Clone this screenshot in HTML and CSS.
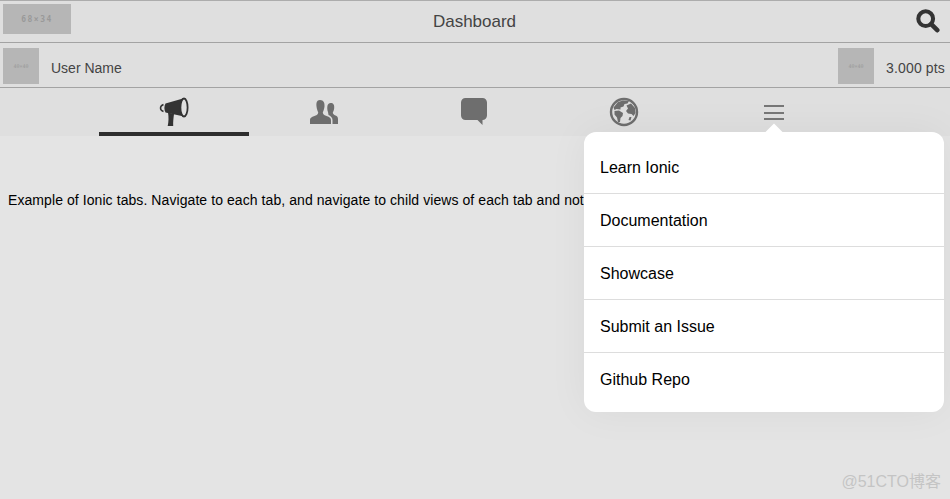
FILE: index.html
```html
<!DOCTYPE html>
<html lang="en">
<head>
  <meta charset="UTF-8" />
  <meta name="viewport" content="width=device-width, initial-scale=1.0"/>
  <title>Dashboard</title>
  <link rel="stylesheet" href="styles.css">
</head>
<body>

<header class="title-bar">
  <div class="thumb thumb-logo">68×34</div>
  <h1>Dashboard</h1>
  <svg class="search-icon" viewBox="0 0 26 26">
    <circle cx="10.5" cy="10.5" r="8" fill="none" stroke="#333" stroke-width="4.4"/>
    <path d="M16.5 16.5 L23 23" stroke="#333" stroke-width="5" stroke-linecap="round"/>
  </svg>
</header>

<div class="user-bar">
  <div class="thumb thumb-small">40×40</div>
  <span class="user-name">User Name</span>
  <div class="thumb thumb-small">40×40</div>
  <span class="pts">3.000 pts</span>
</div>

<nav class="tabs">
  <div class="tab active">
    <svg viewBox="0 0 30 30" width="30" height="30">
      <path fill="#333" d="M6.500 6.500 L24 1.500 L25 19.500 L6.500 15.500 C5 13 5 9 6.500 6.500 Z"/>
      <path fill="none" stroke="#333" stroke-width="1.500" d="M4.500 7.500 C2.500 8.300 1.500 9.500 1.500 11 C1.500 12.500 2.500 13.800 4.500 14.500"/>
      <path fill="#333" d="M9 15.500 L15 17 C14.500 21 14 25 14.200 29 L8.700 29 C9.700 25 9.800 20 9 15.500 Z"/>
      <ellipse cx="25" cy="10.500" rx="3.600" ry="9" fill="#e0e0e0" stroke="#333" stroke-width="1.800"/>
    </svg>
  </div>
  <div class="tab tab-users">
    <svg viewBox="0 0 30 26" width="30" height="26">
      <path fill="#6e6e6e" d="M21.500 4 C24.500 4 25.500 6 25.200 9 C25 11 24.300 12.500 23.800 13.500 C23.800 15 25 15.800 26.500 16.500 C28.200 17.300 29 18 29 20 L29 25 L23.500 25 L23.500 21 C23.500 18.500 21.500 17 19.500 16 L19 13 C18.300 11.500 18 8.500 18.500 6.500 C19 5 20 4 21.500 4 Z"/>
      <path fill="#6e6e6e" d="M11 1 C14.800 1 15.800 4 15.500 7.500 C15.200 10 14.500 12 13.800 13.300 C13.800 15.300 15 16 17 16.800 C20 18 22 18.500 22 21.500 L22 25 L1 25 L1 21.500 C1 18.500 3 18 6 16.800 C8 16 9.200 15.300 9.200 13.300 C8.500 12 7.800 10 7.500 7.500 C7.200 4 7.500 1 11 1 Z"/>
    </svg>
  </div>
  <div class="tab">
    <svg viewBox="0 0 28 28" width="28" height="28">
      <path fill="#6e6e6e" d="M5.500 1 L22.500 1 C25 1 27 3 27 5.500 L27 18.500 C27 21 25 23 22.500 23 L22.500 28 L17.500 23 L5.500 23 C3 23 1 21 1 18.500 L1 5.500 C1 3 3 1 5.500 1 Z"/>
    </svg>
  </div>
  <div class="tab">
    <svg viewBox="0 0 30 30" width="30" height="30">
      <circle cx="15" cy="15" r="13" fill="none" stroke="#6e6e6e" stroke-width="2.400"/>
      <path fill="#6e6e6e" d="M9 5 L14 3.500 L20 4 L18.500 6.500 L15.500 7 L14.500 9.500 L11.500 10.500 L11.500 12.500 L7.500 12 L5.500 13 L4.500 10.500 Z"/>
      <path fill="#6e6e6e" d="M5.500 14 L10 13.500 L14 16 L13.500 19 L11.500 21 L11 25 L9 25 L8 20.500 L5.500 17.500 Z"/>
      <path fill="#6e6e6e" d="M17.500 8.500 L22 6.500 L26 11 L26.500 16 L24.500 19 L22.500 17 L19 16.500 L17 14 L19 11.500 Z"/>
      <path fill="#6e6e6e" d="M20.500 20 L22.500 20 L21.500 23.500 L19.500 23 Z"/>
    </svg>
  </div>
  <div class="tab">
    <div class="burger"><span></span><span></span><span></span></div>
  </div>
</nav>

<main class="content">
  <p>Example of Ionic tabs. Navigate to each tab, and navigate to child views of each tab and notice how each tab has its own history.</p>
</main>

<div class="popover">
  <ul class="menu">
    <li>Learn Ionic</li>
    <li>Documentation</li>
    <li>Showcase</li>
    <li>Submit an Issue</li>
    <li>Github Repo</li>
  </ul>
</div>

<div class="watermark">@51CTO博客</div>

</body>
</html>
```

FILE: styles.css
```css
html, body {
  height: 100%;
}

body {
  font-family: "Liberation Sans", Arial, sans-serif;
  margin: 0;
  background: #e4e4e4;
  color: #000;
  overflow: hidden;
  position: relative;
}

.thumb {
  display: flex;
  align-items: center;
  justify-content: center;
  flex-shrink: 0;
  background: #b6b6b6;
  color: #999;
  font-family: "DejaVu Sans Mono", monospace;
}

.title-bar {
  height: 43px;
  box-sizing: border-box;
  display: flex;
  align-items: center;
  background: #dfdfdf;
  border-top: 1px solid #acacac;
  border-bottom: 1px solid #a3a3a3;
  padding: 0 10px 0 3px;
}

.thumb-logo {
  width: 68px;
  height: 30px;
  margin-bottom: 5px;
  font-size: 8px;
  font-weight: bold;
  letter-spacing: 1.500px;
}

.title-bar h1 {
  flex: 1;
  margin: 0;
  padding-right: 38px;
  font-size: 17px;
  font-weight: 400;
  text-align: center;
  color: #444;
}

.search-icon {
  width: 24px;
  height: 24px;
  margin-bottom: 2px;
}

.user-bar {
  height: 45px;
  box-sizing: border-box;
  display: flex;
  align-items: center;
  padding: 2px 5px 0 3px;
  background: #dfdfdf;
  border-bottom: 1px solid #a3a3a3;
  color: #444;
  font-size: 14px;
}

.thumb-small {
  width: 36px;
  height: 36px;
  font-size: 5px;
}

.user-name {
  flex: 1;
  margin: 4px 0 0 12px;
}

.pts {
  margin: 4px 0 0 12px;
  letter-spacing: 0.150px;
}

.tabs {
  height: 48px;
  display: flex;
  justify-content: center;
  padding-right: 2px;
  background: #dfdfdf;
}

.tab {
  width: 150px;
  height: 48px;
  box-sizing: border-box;
  display: flex;
  justify-content: center;
  padding-top: 9px;
}

.tab.active {
  border-bottom: 4px solid #2e2e2e;
}

.tab svg {
  display: block;
}

.tab-users {
  padding-top: 11px;
}

.burger {
  display: flex;
  flex-direction: column;
  gap: 4.500px;
  width: 20px;
  padding-top: 8px;
}

.burger span {
  display: block;
  height: 2px;
  background: #777;
}

.content {
  padding: 56px 8px 0;
}

.content p {
  margin: 0;
  font-size: 14px;
  line-height: 16px;
  letter-spacing: 0.075px;
  white-space: nowrap;
}

.popover {
  position: absolute;
  top: 132px;
  left: 584px;
  width: 360px;
  height: 280px;
  background: #fff;
  border-radius: 12px;
  box-shadow: 0 0 40px rgba(0, 0, 0, 0.05);
}

/* little arrow pointing at the burger */
.popover::before {
  content: "";
  position: absolute;
  top: -6px;
  left: 184px;
  width: 12px;
  height: 12px;
  background: #fff;
  transform: rotate(45deg);
}

.menu {
  list-style: none;
  margin: 0;
  padding: 9px 0 0;
  position: relative;
}

.menu li {
  height: 53px;
  box-sizing: border-box;
  padding-left: 16px;
  line-height: 54px;
  font-size: 16px;
  border-bottom: 1px solid #ddd;
}

.menu li:last-child {
  border-bottom: none;
}

.watermark {
  position: absolute;
  right: 9px;
  bottom: 7px;
  font-family: "Liberation Sans", "Noto Sans CJK SC", sans-serif;
  font-size: 16px;
  color: #c4c4c4;
}
```
